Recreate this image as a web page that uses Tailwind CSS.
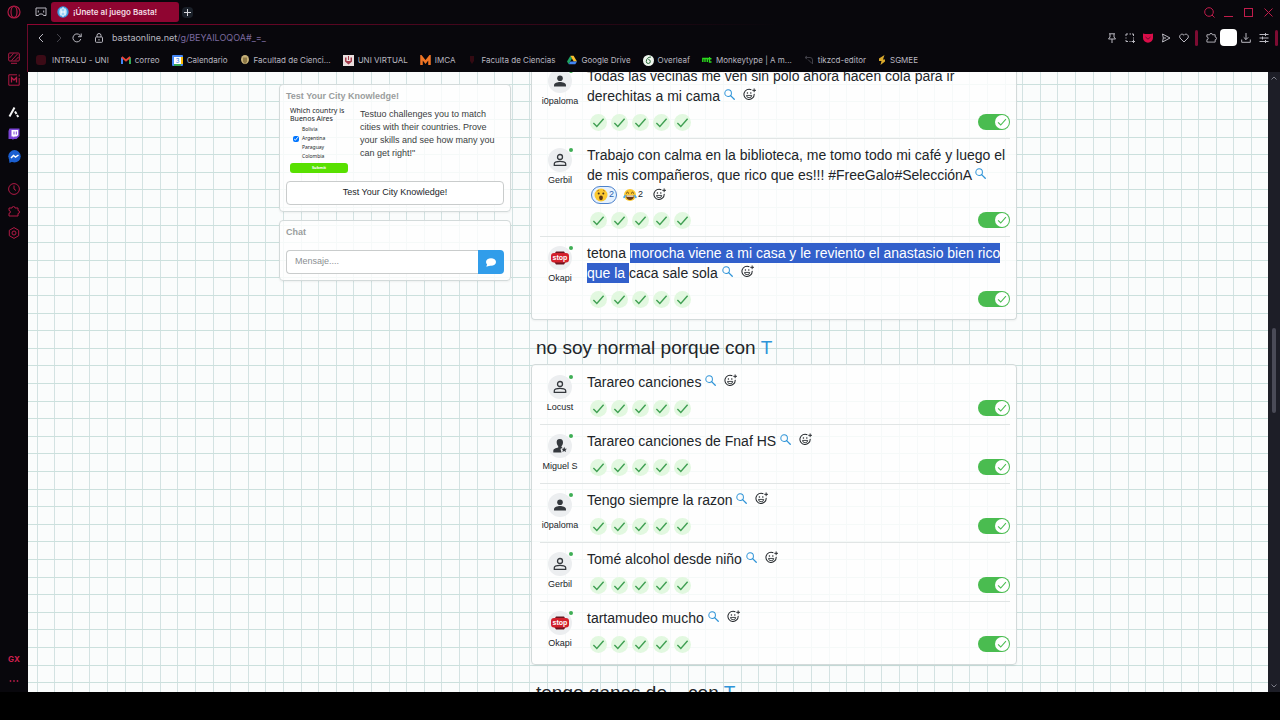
<!DOCTYPE html>
<html lang="es">
<head>
    <meta charset="UTF-8" />
    <meta name="viewport" content="width=device-width, initial-scale=1.0" />
    <title>¡Únete al juego Basta!</title>
    <script src="https://cdn.jsdelivr.net/npm/@tailwindcss/browser@4"></script>
</head>
<body class="flex h-screen overflow-hidden bg-black pb-7 font-['Liberation_Sans',Arial,sans-serif] text-[#212529]">

    <!-- Icons -->
    <svg class="hidden">
        <symbol id="puzzle" viewBox="0 0 12 12"><path d="M1 3h3a1.500 1.500 0 1 1 3 0h3v2.500a1.500 1.500 0 1 1 0 3V11H1V8.300a1.400 1.400 0 1 0 0-2.800z" fill="none" stroke="currentColor" stroke-linejoin="round"/></symbol>
        <symbol id="search" viewBox="0 0 12 12"><circle cx="4.500" cy="4.500" r="3.600" fill="none" stroke="currentColor" stroke-width="1.100"/><path d="M7.200 7.200l4 4" stroke="currentColor" stroke-width="1.400" stroke-linecap="round"/></symbol>
        <symbol id="react" viewBox="0 0 14 14"><path d="M9 1.900A5.500 5.500 0 1 0 12 6.300" fill="none" stroke="currentColor" stroke-width="1.100"/><path d="M12 .5v4M10 2.500h4" stroke="currentColor"/><circle cx="4.800" cy="5.500" r=".8" fill="currentColor"/><circle cx="8.400" cy="5.500" r=".8" fill="currentColor"/><path d="M3.800 8h5.600a2.800 2.500 0 0 1-5.600 0z" fill="none" stroke="currentColor" stroke-width=".9"/></symbol>
        <symbol id="check" viewBox="0 0 14 14"><path d="M1.500 7.500l3.700 3.700L12.500 3" fill="none" stroke="currentColor" stroke-width="1.500"/></symbol>
        <symbol id="person-line" viewBox="0 0 14 14"><circle cx="7" cy="4" r="2.500" fill="none" stroke="currentColor" stroke-width="1.300"/><path d="M1.300 12.300v-1.500C1.300 9 4.500 8.400 7 8.400s5.700.6 5.700 2.400v1.500z" fill="none" stroke="currentColor" stroke-width="1.300"/></symbol>
        <symbol id="person-fill" viewBox="0 0 14 14"><circle cx="7" cy="4.200" r="2.800" fill="currentColor"/><path d="M1 12.500v-1.300C1 9 4.500 8 7 8s6 1 6 3.200v1.300z" fill="currentColor"/></symbol>
        <symbol id="person-star" viewBox="0 0 14 14"><path d="M6.800 0C4.300 0 3.500 1.700 3.700 3.700c.1 1.500.8 2.800 1.500 3.500v1.300C2.700 9.200.3 9.800.3 12v1.500h8.200L7.500 10l2-1.500-1-.5V7.200c.8-.7 1.400-2 1.500-3.500C10.100 1.700 9.300 0 6.800 0z" fill="currentColor"/><path d="M11.200 7.800l.8 1.900 2 .1-1.500 1.300.5 2-1.800-1.100-1.800 1.100.5-2-1.500-1.300 2-.1z" fill="currentColor"/></symbol>
        <symbol id="stop" viewBox="0 0 20 20"><path d="M6 3.500h8l2 3v7l-2 3H6l-2-3v-7z" fill="#6b1620"/><rect x="1" y="5" width="18" height="9.500" rx="3" fill="#d3202c"/><text x="10" y="12" text-anchor="middle" font-size="7" font-weight="bold" fill="#fff">stop</text></symbol>
        <symbol id="wow" viewBox="0 0 14 14"><circle cx="7" cy="7" r="6.500" fill="#fcc931"/><circle cx="4.700" cy="5.500" r="1" fill="#493119"/><circle cx="9.300" cy="5.500" r="1" fill="#493119"/><ellipse cx="7" cy="9.800" rx="1.900" ry="2.400" fill="#5b3415"/><path d="M3 3.200l2-1M11 3.200l-2-1" stroke="#a86a13" stroke-width=".7"/></symbol>
        <symbol id="joy" viewBox="0 0 14 14"><circle cx="7" cy="7" r="6" fill="#fcc931"/><path d="M3 5.500l1.500-1.300L6 5.500M8 5.500l1.500-1.300L11 5.500" fill="none" stroke="#493119" stroke-width=".9"/><path d="M3 7.500h8c0 3-2 4.500-4 4.500s-4-1.500-4-4.500z" fill="#6b3a16"/><path d="M3.500 7.500h7v1.200h-7z" fill="#fff"/><path d="M3 6.500C.8 7.300-.3 9 .6 10s2.300-.8 2.400-3.500zM11 6.500c2.200.8 3.300 2.500 2.400 3.500s-2.300-.8-2.400-3.500z" fill="#4aa9e8"/></symbol>
    </svg>

    <!-- Opera side bar -->
    <aside class="flex w-7 shrink-0 flex-col items-center bg-[#08070c] text-[#b01a45]">
        <div class="flex h-6 items-center"><svg class="size-[14px]" viewBox="0 0 14 14" fill="none" stroke="currentColor" stroke-width="1.2"><circle cx="7" cy="7" r="6"/><ellipse cx="7" cy="7" rx="3" ry="5.500"/></svg></div>
        <nav class="mt-[23px] flex flex-1 flex-col items-center">
            <a href="#" aria-label="Fondo" class="flex h-[22px] items-center"><svg class="size-3" viewBox="0 0 12 12" fill="none" stroke="currentColor"><rect x=".7" y="1" width="10.600" height="8" rx="1"/><path d="M3 11.300h6M1.500 6l4-4.500M3.500 8.500l6-6.500M7 8.500L10.500 5"/></svg></a>
            <a href="#" aria-label="Mods" class="flex h-[22px] items-center"><svg class="size-3" viewBox="0 0 12 12" fill="none" stroke="currentColor"><path d="M9 .8H.8v10.400h10.400V4"/><path d="M3.500 8.500v-5L6 6l2.500-2.500v5" stroke-width="1.300"/><path d="M11.200.5v2"/></svg></a>
            <a href="#" aria-label="Aria" class="mt-2.5 flex h-[22px] items-center"><svg class="size-3" viewBox="0 0 12 12" fill="none" stroke="#f4f4f4" stroke-width="2"><path d="M1.500 10.500L6.500 1.500M7 5.500l1.500 2.500M9 9l1.300 2"/></svg></a>
            <a href="#" aria-label="Twitch" class="flex h-[22px] items-center"><svg class="size-3" viewBox="0 0 12 12"><path d="M1.500.5h10v7.500l-3 3H6l-1.500 1v-1h-4v-8z" fill="#7c45d6"/><path d="M3.500 2h6.700v5L8.500 8.500h-2L5.500 9.500v-1h-2z" fill="#fff"/><path d="M6 3.500v3M8.300 3.500v3" stroke="#7c45d6"/></svg></a>
            <a href="#" aria-label="Messenger" class="flex h-[22px] items-center"><svg class="size-[13px]" viewBox="0 0 13 13"><circle cx="6.500" cy="6.300" r="6.200" fill="#1b5fd0"/><path d="M1 9l.5 4 3-1.500z" fill="#1b5fd0"/><path d="M3 8l2.500-2.500 2 1.500L10.500 5" fill="none" stroke="#fff" stroke-width="1.500"/></svg></a>
            <a href="#" aria-label="Historial" class="mt-[11px] flex h-[22px] items-center"><svg class="size-3" viewBox="0 0 12 12" fill="none" stroke="currentColor"><circle cx="6" cy="6" r="5.400"/><path d="M6 2.500V6l2 1.500"/></svg></a>
            <a href="#" aria-label="Extensiones" class="flex h-[22px] items-center"><svg class="size-3"><use href="#puzzle"/></svg></a>
            <a href="#" aria-label="Ajustes" class="flex h-[22px] items-center"><svg class="size-3" viewBox="0 0 12 12" fill="none" stroke="currentColor"><path d="M6 .6l4.700 2.700v5.400L6 11.400 1.300 8.700V3.300z"/><circle cx="6" cy="6" r="2"/></svg></a>
            <a href="#" class="mt-auto flex h-[22px] items-center font-['Inter',sans-serif] text-[8px] font-bold text-[#d01f4f]">GX</a>
            <a href="#" aria-label="Más" class="flex h-[22px] items-center"><svg class="h-1 w-[10px]" viewBox="0 0 10 4" fill="currentColor"><circle cx="1.500" cy="2" r=".9"/><circle cx="5" cy="2" r=".9"/><circle cx="8.500" cy="2" r=".9"/></svg></a>
        </nav>
    </aside>

    <div class="flex min-w-0 flex-1 flex-col">
        <header class="bg-[#08070c] font-['Inter',sans-serif] text-[8px] text-[#b9b8c0]">
            <!-- Tabs -->
            <div class="flex h-6 items-center">
                <svg class="ml-[7px] h-2.5 w-3" viewBox="0 0 12 10" fill="none" stroke="#b9b8c0"><path d="M1 1h10v7.500H8.500L7.500 7h-3l-1 1.500H1z"/><path d="M3.300 3.500v2M8.700 3.500v2"/></svg>
                <a href="#" class="ml-1 flex h-5 w-32 items-center gap-1 rounded-[3px] bg-[#8f0531] px-1.5 font-semibold text-[#f3dfe5]">
                    <svg class="size-3" viewBox="0 0 12 12"><circle cx="6" cy="6" r="5.700" fill="#3d9ae0"/><circle cx="6" cy="6" r="4" fill="#9bd3f7"/><path d="M4 2.500v7M8 2.500v7M4 6h4M6 1v2M6 9v2" stroke="#fff"/></svg>
                    ¡Únete al juego Basta!
                </a>
                <button aria-label="Nueva pestaña" class="ml-[3px] flex size-[11px] items-center justify-center rounded-sm bg-[#1a2029]"><svg class="size-[7px]" viewBox="0 0 7 7" stroke="#d6d6dc"><path d="M3.500 0v7M0 3.500h7"/></svg></button>
                <div class="ml-auto flex text-[#c01c4b]">
                    <button aria-label="Buscar" class="flex w-[19px] justify-center"><svg class="size-[11px]" viewBox="0 0 11 11" fill="none" stroke="currentColor"><circle cx="5" cy="5" r="4.300"/><path d="M8 8l2.500 2.500"/></svg></button>
                    <button aria-label="Minimizar" class="flex w-[19px] justify-center"><svg class="size-[11px]" viewBox="0 0 11 11" stroke="currentColor"><path d="M1 9.500h9"/></svg></button>
                    <button aria-label="Maximizar" class="flex w-5 justify-center"><svg class="size-[11px]" viewBox="0 0 11 11" fill="none" stroke="currentColor"><rect x="1.500" y="1.500" width="8" height="8"/></svg></button>
                    <button aria-label="Cerrar" class="mr-0.5 flex w-5 justify-center"><svg class="size-[11px]" viewBox="0 0 11 11" stroke="currentColor"><path d="M1.500 1.500l8 8M9.500 1.500l-8 8"/></svg></button>
                </div>
            </div>
            <div class="-ml-px h-px bg-linear-to-r from-[#8f0531] to-transparent to-60%"></div>
            <div class="-ml-px border-l border-[#6b0a2a]">
                <!-- Address bar -->
                <div class="flex h-[25px] items-center">
                    <div class="ml-1 flex">
                        <button aria-label="Atrás" class="flex w-[18px] justify-center"><svg class="size-2.5" viewBox="0 0 10 10" fill="none" stroke="currentColor"><path d="M7 1L3 5l4 4"/></svg></button>
                        <button aria-label="Adelante" class="flex w-[18px] justify-center"><svg class="size-2.5" viewBox="0 0 10 10" fill="none" stroke="#44434b"><path d="M3 1l4 4-4 4"/></svg></button>
                        <button aria-label="Recargar" class="flex w-[18px] justify-center"><svg class="size-2.5" viewBox="0 0 10 10" fill="none" stroke="currentColor"><path d="M8.800 6A4 4 0 1 1 8 2.300L9 3.500M9.200.5v3.200H6"/></svg></button>
                    </div>
                    <svg class="ml-2 h-2.5 w-2.5" viewBox="0 0 10 10" fill="none" stroke="currentColor"><rect x="1.500" y="4" width="7" height="5.300" rx=".8"/><path d="M3 4V2.500a2 2 0 0 1 4 0V4M5 6v1.500"/></svg>
                    <p class="ml-2 text-[9px]">bastaonline.net<span class="text-[#7b6a9f]">/g/BEYAILOQOA#_=_</span></p>
                    <div class="ml-auto flex items-center">
                        <button aria-label="Fijar" class="flex w-[18px] justify-center"><svg class="size-2.5" viewBox="0 0 10 10" fill="none" stroke="currentColor"><path d="M2 .8h6M3 1v3L1.500 6h7L7 4V1M5 6v4"/></svg></button>
                        <button aria-label="Captura" class="flex w-[18px] justify-center"><svg class="size-2.5" viewBox="0 0 10 10" fill="none" stroke="currentColor"><path d="M1 3V1h2M4.500 1h1.500M7 1h1.500v2M8.500 4.500v1M1 4.500v1M1 7v1.500h2M4.500 8.500h1M8.500 6.500v3.500M6.500 8.500h3.500"/></svg></button>
                        <button aria-label="Bloqueo" class="flex w-[18px] justify-center"><svg class="size-2.5" viewBox="0 0 10 10"><path d="M0 .5l2 .5h6l2-.5V5a5 4.700 0 0 1-10 0z" fill="#d90d49"/><path d="M2.500 4l2.500 2.200L7.500 4" fill="none" stroke="#6b0a2a"/></svg></button>
                        <button aria-label="Enviar" class="flex w-[18px] justify-center"><svg class="size-2.5" viewBox="0 0 10 10" fill="none" stroke="currentColor"><path d="M1.500 1L9 5 1.500 9l.8-4zM2.300 5H5"/></svg></button>
                        <button aria-label="Favorito" class="flex w-[18px] justify-center"><svg class="size-2.5" viewBox="0 0 10 10" fill="none" stroke="currentColor"><path d="M5 9L1 5C-.5 2.500 3 -.5 5 2.300 7-.5 10.500 2.500 9 5z"/></svg></button>
                        <div class="mx-[2px] h-4 w-[3px] rounded bg-[#7d0c32]"></div>
                        <button aria-label="Extensiones" class="ml-0.5 flex w-[18px] justify-center"><svg class="size-[11px]"><use href="#puzzle"/></svg></button>
                        <button aria-label="Perfil" class="size-[17px] rounded bg-white"></button>
                        <button aria-label="Descargas" class="flex w-[18px] justify-center"><svg class="size-2.5" viewBox="0 0 10 10" fill="none" stroke="currentColor"><path d="M5 0v6.500M2.700 4.300L5 6.600l2.300-2.300M.7 6.500v2.800h8.600V6.500"/></svg></button>
                        <button aria-label="Menú" class="flex w-[18px] justify-center"><svg class="size-2.5" viewBox="0 0 10 10" fill="none" stroke="currentColor"><path d="M.5 1.500h9M.5 5h9M.5 8.500h9M6.500 0v3M3.500 3.500v3M6.500 7v3"/></svg></button>
                        <div class="mx-0.5 h-4 w-[3px] rounded bg-[#7d0c32]"></div>
                    </div>
                </div>
                <!-- Bookmarks -->
                <nav class="flex h-[22px] items-center gap-3 whitespace-nowrap pb-0.5 pl-2">
                    <a href="#" class="flex items-center gap-1.5"><svg class="size-2.5" viewBox="0 0 10 10"><rect width="10" height="10" rx="3" fill="#3b0b16"/></svg>INTRALU - UNI</a>
                    <a href="#" class="flex items-center gap-1"><svg class="size-2.5" viewBox="0 0 10 10" fill="none" stroke-width="2"><path d="M1 9V2.500" stroke="#4285f4"/><path d="M9 9V2.500" stroke="#34a853"/><path d="M.8 2l4.200 3.500L9.200 2" stroke="#ea4335"/></svg>correo</a>
                    <a href="#" class="flex items-center gap-1"><svg class="size-[11px]" viewBox="0 0 11 11"><rect width="11" height="11" rx="1" fill="#4285f4"/><path d="M9 2h2v7H9z" fill="#fbbc04"/><path d="M2 9h7v2H2z" fill="#34a853"/><path d="M2 2h7v7H2z" fill="#fff"/><text x="5.500" y="8" text-anchor="middle" font-size="6" fill="#1a73e8">3</text></svg>Calendario</a>
                    <a href="#" class="flex items-center gap-1"><svg class="size-2.5" viewBox="0 0 10 10"><ellipse cx="5" cy="4.500" rx="4" ry="4.500" fill="#c6b078"/><path d="M3 2.500h4v4L5 9.500 3 6.500z" fill="#8d7846"/></svg>Facultad de Cienci...</a>
                    <a href="#" class="flex items-center gap-1"><svg class="size-[11px]" viewBox="0 0 11 11"><rect width="11" height="11" fill="#e9dede"/><path d="M2 2.500h1.500V6h4V2.500H9V6.500L5.500 9.500 2 6.500zM5 1h1v4H5z" fill="#a33a4b"/></svg>UNI VIRTUAL</a>
                    <a href="#" class="flex items-center gap-1"><svg class="size-[11px]" viewBox="0 0 11 11"><path d="M1.500 10V2l4 5 4-5v8" fill="none" stroke="#ef7424" stroke-width="2.500"/></svg>IMCA</a>
                    <a href="#" class="flex items-center gap-1"><svg class="size-2.5" viewBox="0 0 10 10"><path d="M3 1h4v5L5 9 3 6z" fill="#330a12"/></svg>Faculta de Ciencias</a>
                    <a href="#" class="flex items-center gap-1"><svg class="size-2.5" viewBox="0 0 10 10"><path d="M3.400.8L0 6.500l1.700 2.800L5 3.600z" fill="#1fa463"/><path d="M3.400.8h3.200L10 6.500H6.700z" fill="#fbc02d"/><path d="M3.400 6.500H10L8.300 9.300H1.700z" fill="#4285f4"/></svg>Google Drive</a>
                    <a href="#" class="flex items-center gap-1"><svg class="size-[11px]" viewBox="0 0 11 11"><circle cx="5.500" cy="5.500" r="5.500" fill="#eef5ee"/><path d="M8 2C5 2 3.300 4 3.300 6.500a2 2 0 1 0 2-2" fill="none" stroke="#2a6b3a"/></svg>Overleaf</a>
                    <a href="#" class="flex items-center gap-1"><svg class="size-2.5" viewBox="0 0 10 10" fill="none" stroke="#2bd91d" stroke-width="1.400"><path d="M.8 7V3.500h4.500V7M3 3.500V7M7.500 2v5H9.500M6 3.700h3.500"/></svg>Monkeytype | A m...</a>
                    <a href="#" class="flex items-center gap-1"><svg class="size-2.5" viewBox="0 0 10 10" fill="none" stroke="#403f47"><path d="M1 2.500h5a2.500 2.500 0 0 1 2.500 2.500v4M4 4.500l4 4M3 1L1 2.500 3 4"/></svg>tikzcd-editor</a>
                    <a href="#" class="flex items-center gap-1"><svg class="h-2.5 w-2" viewBox="0 0 8 10"><path d="M6.500 0L1 3.500v2.500L3.500 6 2.500 10 7 6.500V4.500H5z" fill="#d9a92c"/></svg>SGMEE</a>
                </nav>
            </div>
        </header>

        <!-- Page -->
        <div class="flex min-h-0 flex-1">
            <main class="relative flex-1 overflow-hidden bg-[#fafcfc]">
                <svg class="absolute inset-0 size-full" aria-hidden="true">
                    <defs>
                        <pattern id="sheet" width="88" height="88" patternUnits="userSpaceOnUse">
                            <path d="M9.500 0v88M26.500 0v88M44.500 0v88M61.500 0v88M79.500 0v88" stroke="#d3e2e2"/>
                            <path d="M0 12.500h88M0 29.500h88M0 47.500h88M0 65.500h88M0 82.500h88" stroke="#cbe0dd"/>
                        </pattern>
                    </defs>
                    <rect width="100%" height="100%" fill="url(#sheet)"/>
                </svg>

                <div class="relative mx-auto flex max-w-[738px] items-start gap-5">
                    <div class="mt-3 flex w-[232px] shrink-0 flex-col gap-2 text-[9px]">
                        <section class="rounded border border-[#d3dada] bg-white/80 px-1.5 pb-1.5 pt-1 shadow-xs">
                            <h2 class="leading-[14px] font-bold text-[#9a9d9d]">Test Your City Knowledge!</h2>
                            <div class="mt-1 flex gap-3">
                                <div class="w-[62px] pl-1 font-['Noto_Sans',sans-serif] text-[5px] leading-[9px]">
                                    <p class="text-[7px] leading-[8px] whitespace-nowrap">Which country is<br>Buenos Aires</p>
                                    <ul class="pt-0.5">
                                        <li class="pl-3">Bolivia</li>
                                        <li><label class="flex items-center gap-[3px] pl-[3px]"><input type="checkbox" checked class="size-1.5">Argentina</label></li>
                                        <li class="pl-3">Paraguay</li>
                                        <li class="pl-3">Colombia</li>
                                    </ul>
                                    <button class="mt-0.5 block h-2.5 w-full rounded-[3px] bg-[#58e000] text-[4px] leading-none font-bold text-white">Submit</button>
                                </div>
                                <p class="flex-1 pt-px text-[9px] leading-[13px] text-[#3a3d40]">Testuo challenges you to match cities with their countries. Prove your skills and see how many you can get right!"</p>
                            </div>
                            <button class="mt-2 block h-6 w-full rounded-sm border border-[#c9cccc] bg-white">Test Your City Knowledge!</button>
                        </section>
                        <section class="rounded border border-[#d3dada] bg-white/80 px-1.5 pb-1.5 pt-1 shadow-xs">
                            <h2 class="leading-[14px] font-bold text-[#9a9d9d]"><label for="message">Chat</label></h2>
                            <form class="mt-[11px] flex h-6">
                                <input id="message" type="text" placeholder="Mensaje...." class="min-w-0 flex-1 rounded-l-sm border border-r-0 border-[#c9cccc] bg-white px-2 placeholder:text-[#8b8f92]">
                                <button type="button" aria-label="Enviar" class="flex w-[26px] items-center justify-center rounded-r-sm bg-[#319dea]"><svg class="h-[9px] w-2.5" viewBox="0 0 10 9"><ellipse cx="5" cy="4" rx="5" ry="3.800" fill="#fff"/><path d="M1.500 5L.3 8.800 4.500 7.500z" fill="#fff"/></svg></button>
                            </form>
                        </section>
                    </div>

                    <div id="rounds" class="-mt-3 min-w-0 flex-1"></div>
                </div>
            </main>
            <div class="flex w-3 shrink-0 flex-col items-center bg-[#1d1e27]">
                <svg class="mt-1 h-1 w-1.5" viewBox="0 0 6 4" fill="none" stroke="#7c7d88"><path d="M.5 3.500L3 1l2.500 2.500"/></svg>
                <div class="mt-[248px] h-[85px] w-1 rounded bg-[#4a4b57]"></div>
                <svg class="mt-auto mb-1 h-1 w-1.5" viewBox="0 0 6 4" fill="none" stroke="#7c7d88"><path d="M.5.5L3 3 5.500.5"/></svg>
            </div>
        </div>
    </div>

    <script>
        const rounds = [
            { answers: [
                { name: "i0paloma", icon: "person-fill", text: "Todas las vecinas me ven sin polo ahora hacen cola para ir<br>derechitas a mi cama" },
                { name: "Gerbil", icon: "person-line", reactions: true, text: "Trabajo con calma en la biblioteca, me tomo todo mi café y luego el<br>de mis compañeros, que rico que es!!! #FreeGalo#SelecciónA" },
                { name: "Okapi", icon: "stop", text: 'tetona <span class="bg-[#3260cb] py-0.5 text-white">morocha viene a mi casa y le reviento el anastasio bien rico<br>que la </span>caca sale sola' },
            ] },
            { title: "no soy normal porque con", answers: [
                { name: "Locust", icon: "person-line", text: "Tarareo canciones" },
                { name: "Miguel S", icon: "person-star", text: "Tarareo canciones de Fnaf HS" },
                { name: "i0paloma", icon: "person-fill", text: "Tengo siempre la razon" },
                { name: "Gerbil", icon: "person-line", text: "Tomé alcohol desde niño" },
                { name: "Okapi", icon: "stop", text: "tartamudeo mucho" },
            ] },
            { title: "tengo ganas de... con", answers: [] },
        ];

        const react = '<button aria-label="Reaccionar" class="inline-block"><svg class="size-[13px]"><use href="#react"/></svg></button>';

        const reactions = `
            <div class="flex h-[19px] items-center gap-1.5 pl-1 text-[9px]">
                <button class="flex h-[18px] items-center gap-px rounded-full border border-[#4c82cc] bg-[#e6f1fd] px-0.5 text-[#2c62b0]"><svg class="size-[14px]"><use href="#wow"/></svg>2</button>
                <button class="mr-1 flex items-center gap-px"><svg class="size-[14px]"><use href="#joy"/></svg>2</button>
                ${react}
            </div>`;

        const check = '<span class="flex size-[17px] items-center justify-center rounded-full bg-[#e2f8e0] text-[#3f9f52]"><svg class="size-[13px]"><use href="#check"/></svg></span>';

        const answer = (a) => `
            <li class="flex gap-[7px] border-b border-[#e1e5e5] pt-1.5 last:border-b-0">
                <div class="w-10 text-center">
                    <div class="relative mx-auto mt-[3px] flex size-6 items-center justify-center rounded-full bg-[#eceef0] text-[#34383d]">
                        <svg class="${a.icon === "stop" ? "size-5" : "size-[14px]"}"><use href="#${a.icon}"/></svg>
                        <i class="absolute top-0 right-[-1px] size-1 rounded-full bg-[#3fae55]"></i>
                    </div>
                    <p class="mt-0.5 text-[9px] leading-3">${a.name}</p>
                </div>
                <div class="min-w-0 flex-1">
                    <p class="text-[14px] leading-5 whitespace-nowrap">${a.text}
                        <a href="#" aria-label="Buscar" class="inline-block align-[1px] text-[#2f94d8]"><svg class="size-[11px]"><use href="#search"/></svg></a>
                        ${a.reactions ? "" : `<span class="pl-1">${react}</span>`}
                    </p>
                    ${a.reactions ? reactions : ""}
                    <div class="mt-1 mb-1 flex h-6 items-center gap-1 pl-[3px]">
                        ${check.repeat(5)}
                        <label class="relative ml-auto h-4 w-8">
                            <input type="checkbox" checked aria-label="Válida" class="block h-4 w-8 appearance-none rounded-full bg-[#4abc50]">
                            <span class="absolute top-px right-px flex size-[14px] items-center justify-center rounded-full bg-white text-[#4abc50]"><svg class="size-2.5"><use href="#check"/></svg></span>
                        </label>
                    </div>
                </div>
            </li>`;

        document.getElementById("rounds").innerHTML = rounds.map((r, i) => `
            <section>
                ${r.title ? `<h2 class="px-[5px] pt-4 pb-1 text-[19px] leading-6">${r.title} <span class="text-[#2f94d8]">T</span></h2>` : ""}
                <ul class="${i === 0 ? "rounded-b border border-t-0 border-[#d3dada] bg-white/80 pr-1.5 pl-2 pb-1 shadow-xs" : "rounded border border-[#d3dada] bg-white/80 pr-1.5 pl-2 pt-px pb-1 shadow-xs"}">${r.answers.map(answer).join("")}</ul>
            </section>`).join("");
    </script>
</body>
</html>
